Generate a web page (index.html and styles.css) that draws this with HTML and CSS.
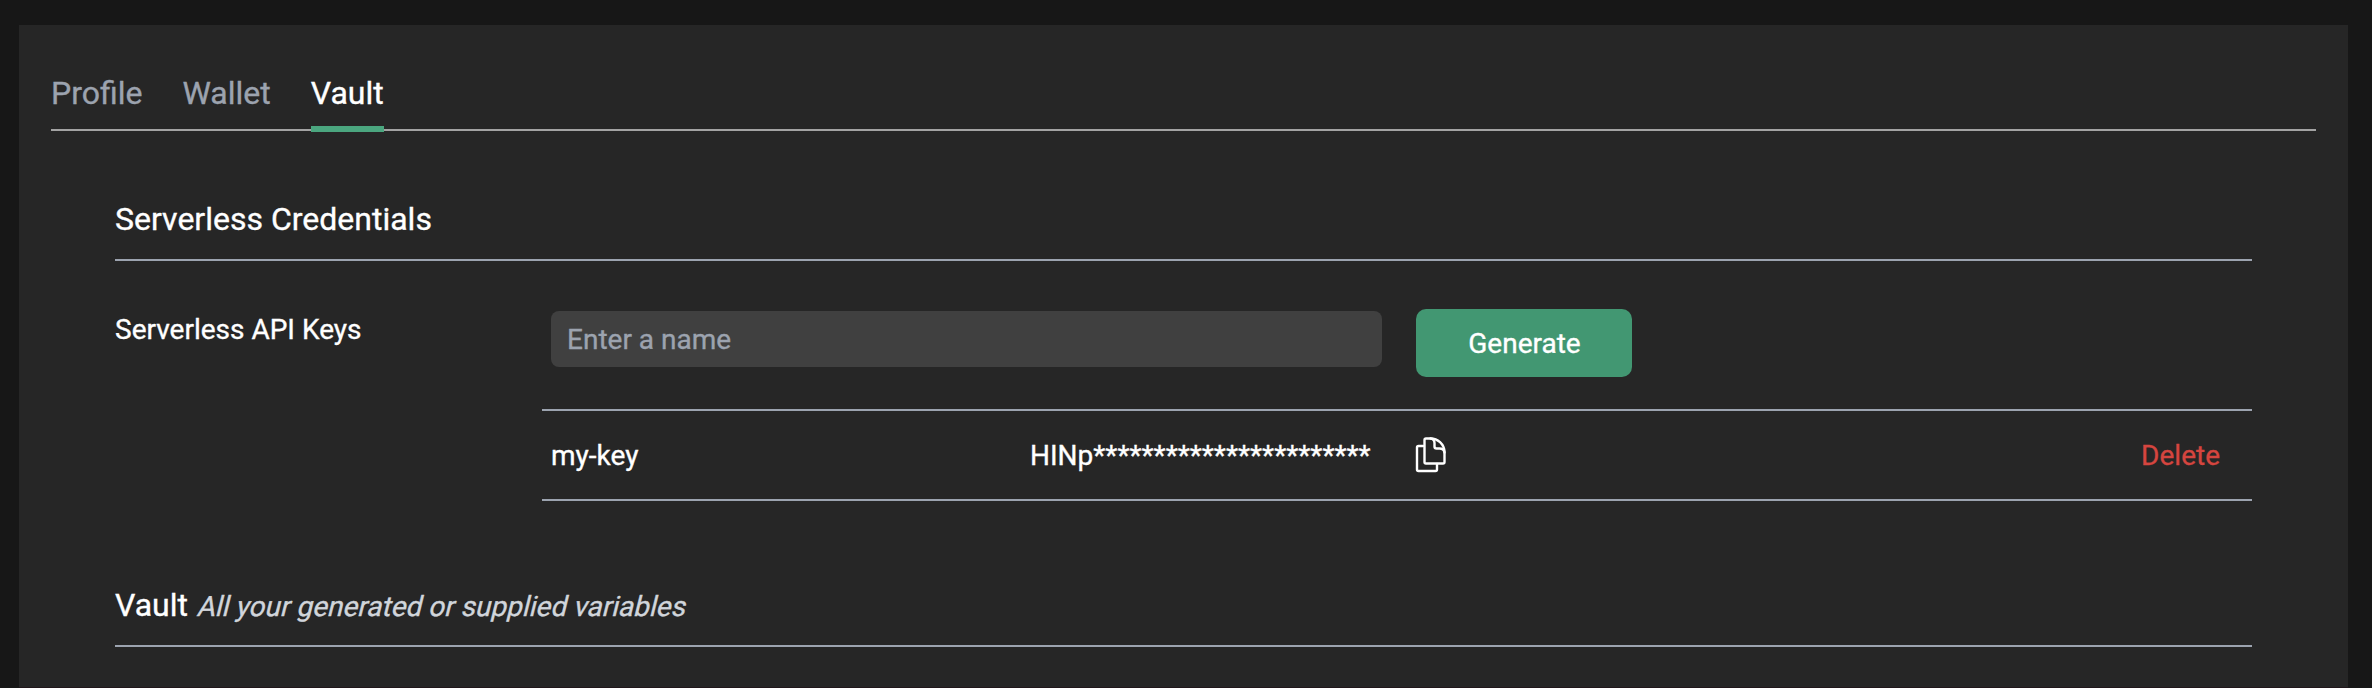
FILE: index.html
```html
<!DOCTYPE html>
<html lang="en">
<head>
<meta charset="utf-8">
<title>Vault</title>
<link rel="stylesheet" href="styles.css">
</head>
<body>
<main class="panel">
  <nav class="tabs">
    <a class="tab">Profile</a>
    <a class="tab">Wallet</a>
    <a class="tab tab-active">Vault</a>
  </nav>
  <div class="content">
    <section class="section">
      <h2 class="heading">Serverless Credentials</h2>
      <div class="keys">
        <div class="label">Serverless API Keys</div>
        <div class="keys-body">
          <form class="form">
            <input class="name-input" type="text" placeholder="Enter a name">
            <button class="generate" type="button">Generate</button>
          </form>
          <div class="key-row">
            <span class="key-name">my-key</span>
            <span class="key-value">HINp***********************</span>
            <svg class="copy" viewBox="0 0 32 36" fill="none" stroke="#fff" stroke-width="2.4" stroke-linejoin="round" stroke-linecap="round">
              <path d="M8 9H3.5Q2 9 2 10.5V32.5Q2 34 3.5 34H20.500Q22 34 22 32.500V27"/>
              <path d="M11 1.500H15A14 14 0 0 1 29.500 15V25Q29.500 26.500 28 26.500H11Q9.500 26.500 9.500 25V3Q9.500 1.500 11 1.500Z"/>
              <path d="M15.500 1.500Q19.500 2 19.500 6V9.500Q19.500 11.500 21.500 11.500H24.500Q29 11.500 29.500 15.500"/>
            </svg>
            <a class="delete">Delete</a>
          </div>
        </div>
      </div>
    </section>
    <section class="section">
      <h2 class="heading">Vault <em class="note">All your generated or supplied variables</em></h2>
    </section>
  </div>
</main>
</body>
</html>
```
FILE: styles.css
```css
* { box-sizing: border-box; }
body {
  margin: 0;
  height: 688px;
  padding: 25px 24px 0 19px;
  overflow: hidden;
  background: #171717;
  color: #fff;
  font: 28px/40px Roboto, sans-serif;
  -webkit-text-stroke: 0.35px;
}
.panel {
  height: 663px;
  padding: 44px 32px 0;
  border-bottom: 1px solid #21171b;
  background: #262626;
}
.tabs {
  display: flex;
  gap: 40px;
  height: 62px;
  border-bottom: 2px solid #a3a3a3;
}
.tab {
  height: 63px;
  font-size: 32px;
  line-height: 48px;
  color: #9ca3af;
}
.tab-active {
  color: #fff;
  border-bottom: 6px solid #4ba67f;
}
.content { padding: 64px 64px 0; }
.heading {
  margin: 0;
  height: 66px;
  border-bottom: 2px solid #9ca3af;
  font-size: 32px;
  font-weight: 400;
  line-height: 48px;
}
.keys {
  display: flex;
  padding: 48px 0 80px;
}
.label {
  width: 427px;
  line-height: 42px;
}
.keys-body { flex: 1; }
.form {
  display: flex;
  align-items: flex-start;
  height: 100px;
  padding-left: 9px;
}
.name-input {
  width: 831px;
  height: 56px;
  margin: 2px 34px 0 0;
  padding: 0 16px;
  border: 0;
  border-radius: 8px;
  background: #404040;
  color: #fff;
  font: 28px/40px Roboto, sans-serif;
}
.name-input::placeholder { color: #9ca3af; }
.generate {
  width: 216px;
  height: 68px;
  padding: 2px 0 0 1px;
  border: 0;
  border-radius: 10px;
  background: #429772;
  color: #fff;
  font: 28px/40px Roboto, sans-serif;
  -webkit-text-stroke: 0.35px;
}
.key-row {
  display: grid;
  grid-template-columns: 479px 385px 1fr auto;
  align-items: center;
  height: 92px;
  padding: 0 32px 0 9px;
  border: solid #9ca3af;
  border-width: 2px 0;
  line-height: 42px;
}
.key-name, .key-value, .delete { padding-top: 2px; }
.copy {
  width: 32px;
  height: 36px;
}
.delete { color: #d5453f; }
.note {
  display: inline-block;
  font-size: 28px;
  font-style: normal;
  color: #d1d5db;
  transform: skewX(-14deg);
  transform-origin: 0 34px;
}
```
